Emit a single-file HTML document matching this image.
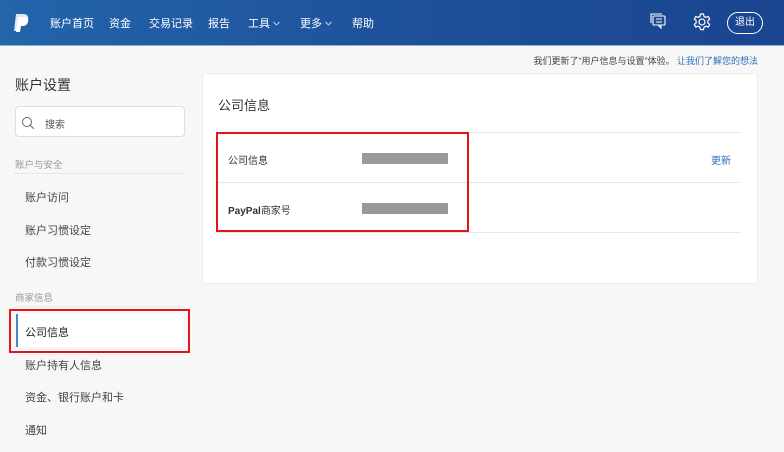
<!DOCTYPE html>
<html><head><meta charset="utf-8"><style>
*{margin:0;padding:0;box-sizing:border-box}
body{width:784px;height:452px;overflow:hidden;background:#f7f7f7;font-family:"Liberation Sans","Noto Sans CJK SC",sans-serif;color:#333;position:relative}
.a{position:absolute;white-space:nowrap}
.hdr{position:absolute;left:0;top:0;width:784px;height:46px;background:linear-gradient(90deg,#2364ab,#1d4e98 60%,#1a4590);border-bottom:1px solid #8fb0d8}
.nav{color:#fff;font-size:11px;top:15px}
.side{font-size:11px;color:#444}
.grp{font-size:9.5px;color:#999}
.bar{background:#999;position:absolute;height:11px;width:86px}
.line{position:absolute;height:1px;background:#e8e8e8}
</style></head><body>
<div class="hdr"></div>
<svg class="a" style="left:13px;top:13px" width="16" height="20" viewBox="0 0 16 20"><path d="M3 1h7c4 0 6 2 5 6-1 3-3 5-6 5H7l-1 6H1z" fill="#fff" opacity=".85"/><path d="M5 4h6c3 0 5 2 4 5-1 3-3 4-5 4H8l-1 6H3z" fill="#fff"/></svg>
<div class="a nav" style="left:50px">账户首页</div>
<div class="a nav" style="left:109px">资金</div>
<div class="a nav" style="left:149px">交易记录</div>
<div class="a nav" style="left:208px">报告</div>
<div class="a nav" style="left:248px">工具 <svg width="7" height="5" viewBox="0 0 7 5" style="vertical-align:1px"><path d="M.5 1l3 3 3-3" fill="none" stroke="#c8d6ea" stroke-width=".9"/></svg></div>
<div class="a nav" style="left:300px">更多 <svg width="7" height="5" viewBox="0 0 7 5" style="vertical-align:1px"><path d="M.5 1l3 3 3-3" fill="none" stroke="#c8d6ea" stroke-width=".9"/></svg></div>
<div class="a nav" style="left:352px">帮助</div>
<svg class="a" style="left:649px;top:12px" width="18" height="18" viewBox="0 0 18 18" fill="none" stroke="#fff" stroke-width="1.1"><rect x="4" y="4" width="12" height="9" rx="1"/><path d="M2 11V2h11M7 7h6M7 10h6"/><path d="M12 13v3l-3-3"/></svg>
<svg class="a" style="left:692px;top:12px" width="20" height="20" viewBox="0 0 20 20" fill="none" stroke="#fff" stroke-width="1.2"><circle cx="10" cy="10" r="3"/><path d="M8.5 2h3l.5 2.3 2 1.1 2.2-.9 1.5 2.6-1.8 1.5v2.4l1.8 1.5-1.5 2.6-2.2-.9-2 1.1-.5 2.3h-3l-.5-2.3-2-1.1-2.2.9-1.5-2.6 1.8-1.5V8.6L2.3 7.1l1.5-2.6 2.2.9 2-1.1z"/></svg>
<div class="a" style="left:727px;top:12px;width:36px;height:22px;border:1.2px solid #fff;border-radius:11px;color:#fff;font-size:10px;text-align:center;line-height:20px">退出</div>
<div class="a" style="right:26px;top:54px;font-size:9px;color:#444">我们更新了“用户信息与设置”体验。 <span style="color:#2a6ebb">让我们了解您的想法</span></div>
<div class="a" style="left:15px;top:75px;font-size:14px;color:#333">账户设置</div>
<div class="a" style="left:15px;top:106px;width:170px;height:31px;background:#fff;border:1px solid #ddd;border-radius:4px"></div>
<svg class="a" style="left:21px;top:116px" width="14" height="14" viewBox="0 0 14 14" fill="none" stroke="#666" stroke-width="1"><circle cx="6" cy="6" r="4.5"/><path d="M9.3 9.3l3.5 3.5"/></svg>
<div class="a" style="left:45px;top:116px;font-size:10px;color:#555">搜索</div>
<div class="a grp" style="left:15px;top:157px">账户与安全</div>
<div class="line" style="left:15px;top:173px;width:170px;background:#e6e6e6"></div>
<div class="a side" style="left:25px;top:189px">账户访问</div>
<div class="a side" style="left:25px;top:222px">账户习惯设定</div>
<div class="a side" style="left:25px;top:254px">付款习惯设定</div>
<div class="a grp" style="left:15px;top:290px">商家信息</div>
<div class="line" style="left:15px;top:306px;width:170px;background:#e6e6e6"></div>
<div class="a" style="left:16px;top:314px;width:168px;height:33px;background:#fff;border-left:2px solid #4a86c6"></div>
<div class="a side" style="left:25px;top:324px;color:#222">公司信息</div>
<div class="a" style="left:9px;top:309px;width:181px;height:44px;border:2px solid #e4141b"></div>
<div class="a side" style="left:25px;top:357px">账户持有人信息</div>
<div class="a side" style="left:25px;top:389px">资金、银行账户和卡</div>
<div class="a side" style="left:25px;top:422px">通知</div>
<div class="a" style="left:202px;top:73px;width:556px;height:211px;background:#fff;border:1px solid #ececec;border-radius:4px"></div>
<div class="a" style="left:218px;top:95px;font-size:13px;color:#333">公司信息</div>
<div class="line" style="left:216px;top:132px;width:525px"></div>
<div class="line" style="left:216px;top:182px;width:525px"></div>
<div class="line" style="left:216px;top:232px;width:525px"></div>
<div class="a" style="left:228px;top:152px;font-size:10px">公司信息</div>
<div class="bar" style="left:362px;top:153px"></div>
<div class="a" style="left:711px;top:152px;font-size:10px;color:#2a6ebb">更新</div>
<div class="a" style="left:228px;top:202px;font-size:10px"><b>PayPal</b>商家号</div>
<div class="bar" style="left:362px;top:203px"></div>
<div class="a" style="left:216px;top:132px;width:253px;height:100px;border:2px solid #e4141b"></div>
</body></html>
